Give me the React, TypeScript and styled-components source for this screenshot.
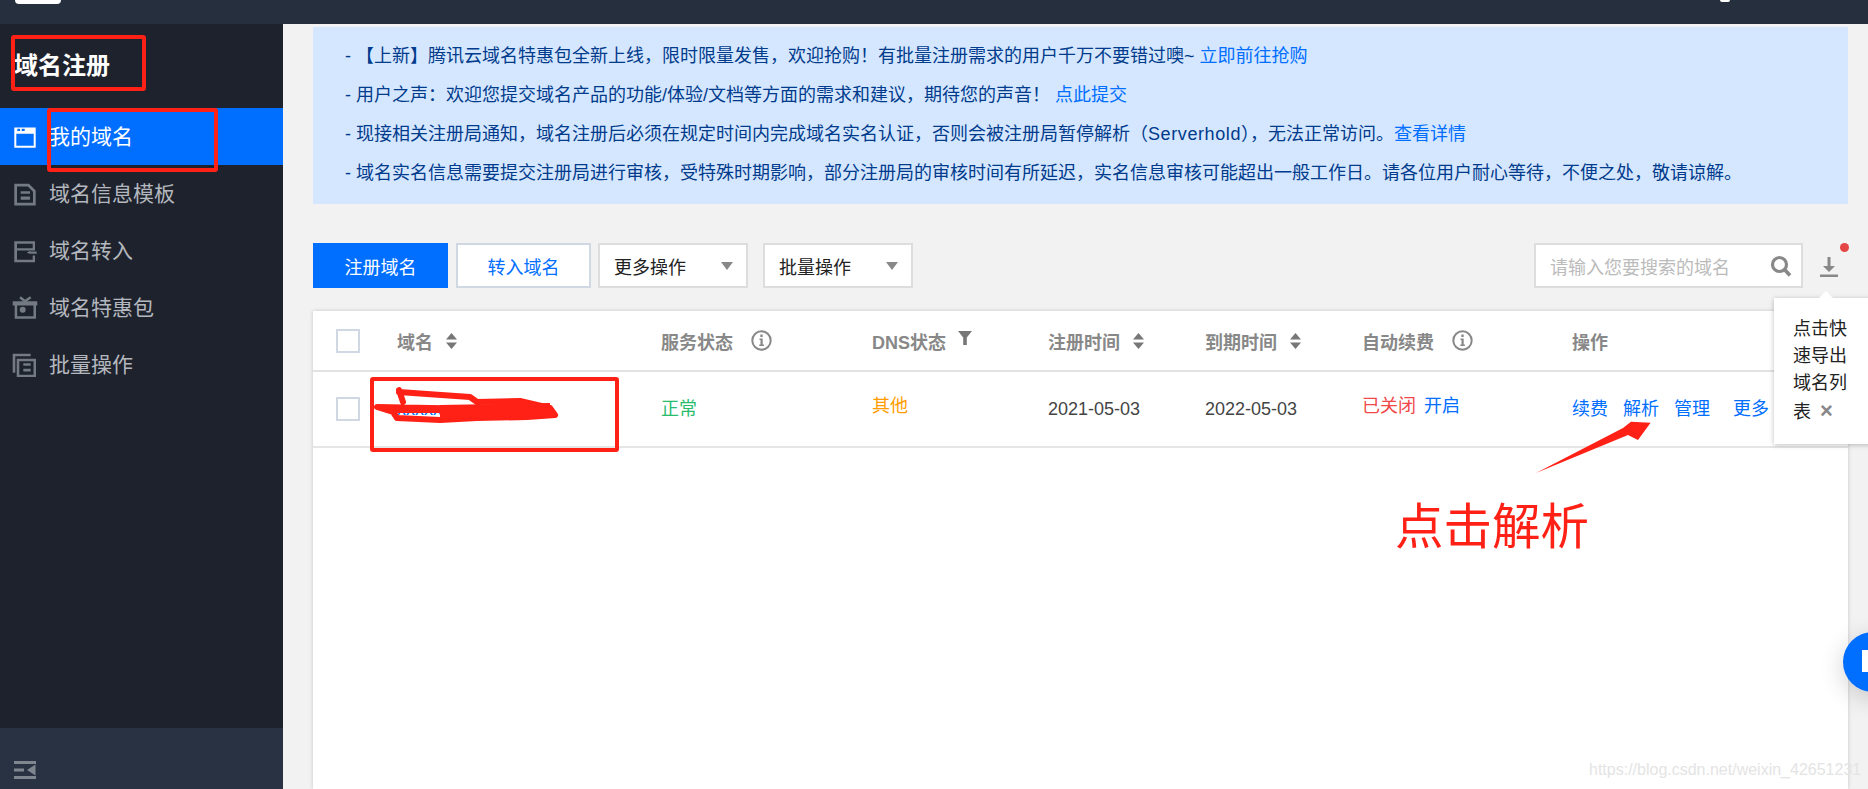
import styled, { createGlobalStyle } from "styled-components";

const GlobalStyle = createGlobalStyle`
  html, body {
    margin: 0;
    padding: 0;
    background: #f2f2f2;
  }
  * {
    box-sizing: border-box;
  }
  body {
    font-family: "Liberation Sans", "Noto Sans CJK SC", sans-serif;
  }
`;

const MENU_ITEM = [
  { text: "我的域名", icon: "window" },
  { text: "域名信息模板", icon: "doc" },
  { text: "域名转入", icon: "transfer" },
  { text: "域名特惠包", icon: "gift" },
  { text: "批量操作", icon: "layers" },
];

const COLUMNS = "84px 264px 211px 176px 157px 157px 210px 1fr";

const MenuIcon = ({ name }: { name: string }) => (
  <svg width="26" height="24" viewBox="0 0 26 24" fill="currentColor">
    {name === "window" && (
      <path
        fillRule="evenodd"
        d="M2.300 2.500h21.400v20.300H2.300zM4.300 8.800v12h17.400v-12zM5.300 3.800V6h2.800V3.800zM9.700 3.800V6h3V3.800z"
      />
    )}
    {name === "doc" && (
      <path
        fillRule="evenodd"
        d="M2.300 1.800H17l6.700 6.700v15H2.300zM5 4.500v16.300h16V9.700l-5.200-5.200zM8.700 9.200H18v2.600H8.700zM8.700 14.500H18v3.300H8.700z"
      />
    )}
    {name === "transfer" && (
      <>
        <path
          fillRule="evenodd"
          d="M2.300 2.200H23v9.300H5v9.300h15.700v-4.300H23v6.700H2.300zM5 4.700v4.500h15.700V4.700z"
        />
        <path d="M14.700 13.700 18 11.800v.700h6.700v2.300H17.500z" />
      </>
    )}
    {name === "gift" && (
      <>
        <path
          fillRule="evenodd"
          d="M.700 5.200h24.600v4.300H24v13.300H2.700V9.500H.700zM5.200 9.500v10.800h16.300V9.500zM10.700 10.800a3 3 0 1 1 0 6 3 3 0 0 1 0-6z"
        />
        <path d="M8 1.200 13 5.200 18.700 1.200" fill="none" stroke="currentColor" strokeWidth="2.500" />
      </>
    )}
    {name === "layers" && (
      <>
        <path d="M.700.800h18v2.500H3.300v16.500H.700z" />
        <path
          fillRule="evenodd"
          d="M4.700 5.800H24v18.400H4.700zM7.300 8.300v13.400h14.200V8.300zM11.300 10.200h7.400v2.600h-7.400zM11.300 15.800h7.400v2.700h-7.400z"
        />
      </>
    )}
  </svg>
);

const SortIcon = () => (
  <SortSvg width="11" height="16" viewBox="0 0 11 16" fill="#777">
    <path d="M5.500 0 11 6.500H0zM0 9.500h11L5.500 16z" />
  </SortSvg>
);

const InfoIcon = () => (
  <InfoSvg width="21" height="21" viewBox="0 0 21 21">
    <circle cx="10.500" cy="10.500" r="9.200" fill="none" stroke="#888" strokeWidth="2" />
    <path d="M9.300 4.500h2.400v2.400H9.300zM8.500 8.500h3.200v6h1.200v1.600H8.300v-1.600h1.200V10H8.500z" fill="#888" />
  </InfoSvg>
);

const App = () => {
  return (
    <Page>
      <GlobalStyle />
      <TopBar>
        <Logo />
        <Avatar />
      </TopBar>
      <Body>
        <Sidebar>
          <SideTitle>域名注册</SideTitle>
          <MenuList>
            {MENU_ITEM.map((menu, i) => (
              <MenuItem key={menu.text} $active={i === 0}>
                <MenuIcon name={menu.icon} />
                <span>{menu.text}</span>
              </MenuItem>
            ))}
          </MenuList>
          <CollapseBar>
            <svg width="22" height="18" viewBox="0 0 22 18" fill="#7f868f">
              <path d="M0 0h22v3H0zM0 15h22v3H0zM0 7.500h10v3H0zM21.500 3.500v11L13 9z" />
            </svg>
          </CollapseBar>
        </Sidebar>
        <Main>
          <Notice>
            <p>
              - 【上新】腾讯云域名特惠包全新上线，限时限量发售，欢迎抢购！有批量注册需求的用户千万不要错过噢~{" "}
              <a>立即前往抢购</a>
            </p>
            <p>
              - 用户之声：欢迎您提交域名产品的功能/体验/文档等方面的需求和建议，期待您的声音！ <a>点此提交</a>
            </p>
            <p>
              - 现接相关注册局通知，域名注册后必须在规定时间内完成域名实名认证，否则会被注册局暂停解析（<Latin>Serverhold</Latin>），无法正常访问。
              <a>查看详情</a>
            </p>
            <p>
              - 域名实名信息需要提交注册局进行审核，受特殊时期影响，部分注册局的审核时间有所延迟，实名信息审核可能超出一般工作日。请各位用户耐心等待，不便之处，敬请谅解。
            </p>
          </Notice>
          <Toolbar>
            <PrimaryBtn>注册域名</PrimaryBtn>
            <OutlineBtn>转入域名</OutlineBtn>
            <SelectBtn>更多操作</SelectBtn>
            <SelectBtn>批量操作</SelectBtn>
            <SearchBox>
              <span>请输入您要搜索的域名</span>
              <svg width="22" height="22" viewBox="0 0 22 22" fill="none" stroke="#888">
                <circle cx="9.500" cy="9.500" r="7" strokeWidth="3.200" />
                <path d="M14.500 14.500 20 20.500" strokeWidth="3.600" />
              </svg>
            </SearchBox>
            <DownloadBtn>
              <svg width="18" height="20" viewBox="0 0 18 20" fill="#888">
                <path d="M7.500 0h3v9H15l-6 6-6-6h4.500zM0 17.500h18V20H0z" />
              </svg>
            </DownloadBtn>
          </Toolbar>
          <TableCard>
            <HeadRow>
              <CheckCell>
                <CheckBox />
              </CheckCell>
              <HeadCell>
                域名
                <SortIcon />
              </HeadCell>
              <HeadCell>
                服务状态
                <InfoIcon />
              </HeadCell>
              <HeadCell>
                DNS状态
                <FilterSvg width="14" height="14" viewBox="0 0 14 14" fill="#777">
                  <path d="M0 0h14L8.800 6.500V14H5.200V6.500z" />
                </FilterSvg>
              </HeadCell>
              <HeadCell>
                注册时间
                <SortIcon />
              </HeadCell>
              <HeadCell>
                到期时间
                <SortIcon />
              </HeadCell>
              <HeadCell>
                自动续费
                <InfoIcon />
              </HeadCell>
              <HeadCell>操作</HeadCell>
            </HeadRow>
            <DataRow>
              <CheckCell>
                <CheckBox />
              </CheckCell>
              <DataCell $color="#006eff">xxxxxxxxxxxx.com</DataCell>
              <DataCell $color="#29bc6d">正常</DataCell>
              <DataCell $color="#ff9d00" $raised>
                其他
              </DataCell>
              <DataCell>2021-05-03</DataCell>
              <DataCell>2022-05-03</DataCell>
              <DataCell $color="#f04848" $raised>
                已关闭<RowLink $left={8}>开启</RowLink>
              </DataCell>
              <DataCell>
                <RowLink>续费</RowLink>
                <RowLink $left={15}>解析</RowLink>
                <RowLink $left={15}>管理</RowLink>
                <RowLink $left={23}>更多</RowLink>
              </DataCell>
            </DataRow>
          </TableCard>
        </Main>
      </Body>

      <Tooltip>
        点击快速导出域名列表<CloseMark>×</CloseMark>
      </Tooltip>
      <NotifyDot />
      <ChatBubble>
        <svg width="24" height="26" viewBox="0 0 24 26" fill="#fff">
          <path d="M0 0h24v26l-6-4H0z" />
        </svg>
      </ChatBubble>
      <Watermark>https://blog.csdn.net/weixin_42651231</Watermark>

      <TitleMark />
      <MenuMark />
      <DomainMark />
      <Annotations viewBox="0 0 1868 789" width="1868" height="789">
        <path
          d="M399 390 L403 402 M399 392 L427 394 L470 397 L477 402 L520 401 L550 408 L555 415 L527 417 L477 418 L440 420 L397 418 L393 412 L377 407 L430 408 L550 410"
          fill="none"
          stroke="#ff2116"
          strokeWidth="6"
          strokeLinecap="round"
          strokeLinejoin="round"
        />
        <path d="M395 410 L442 410" fill="none" stroke="#ff2116" strokeWidth="6" />
        <path d="M440 405 L550 403 L550 415 L440 419 Z" fill="#ff2116" />
        <polygon
          points="1650.600,422.700 1638,440 1628,435 1536,473 1623,428 1631,421.700"
          fill="#ff2116"
        />
      </Annotations>
      <CalloutText>点击解析</CalloutText>
    </Page>
  );
};

const Page = styled.div`
  position: relative;
  width: 1868px;
  height: 789px;
  display: flex;
  flex-direction: column;
  overflow: hidden;
  background: #f2f2f2;
`;

const TopBar = styled.header`
  height: 24px;
  flex: none;
  display: flex;
  align-items: flex-start;
  justify-content: space-between;
  padding: 0 138px 0 15px;
  background: #262f3e;
`;

const Logo = styled.div`
  width: 46px;
  height: 4px;
  border-radius: 0 0 10px 10px;
  background: #fff;
`;

const Avatar = styled.div`
  width: 10px;
  height: 2px;
  border-radius: 0 0 5px 5px;
  background: #fff;
`;

const Body = styled.div`
  flex: 1;
  min-height: 0;
  display: flex;
`;

const Sidebar = styled.nav`
  width: 283px;
  flex: none;
  display: flex;
  flex-direction: column;
  background: #1e222d;
`;

const SideTitle = styled.h2`
  height: 84px;
  margin: 0;
  padding: 0 0 1px 14px;
  display: flex;
  align-items: center;
  font-size: 24px;
  line-height: 30px;
  font-weight: 700;
  color: #fff;
`;

const MenuList = styled.div`
  flex: 1;
  display: flex;
  flex-direction: column;
`;

const MenuItem = styled.div<{ $active?: boolean }>`
  height: 57px;
  display: flex;
  align-items: center;
  gap: 11px;
  padding-left: 12px;
  font-size: 21px;
  background: ${(p) => (p.$active ? "#006eff" : "transparent")};
  color: ${(p) => (p.$active ? "#fff" : "#b4b8be")};

  & > span {
    padding-bottom: 4px;
  }

  & > svg {
    color: ${(p) => (p.$active ? "#fff" : "#737a82")};
  }
`;

const CollapseBar = styled.div`
  height: 61px;
  display: flex;
  align-items: flex-end;
  padding: 0 0 10px 14px;
  background: #283242;
`;

const Main = styled.main`
  flex: 1;
  min-width: 0;
  display: flex;
  flex-direction: column;
  padding: 3px 20px 0 30px;
`;

const Notice = styled.section`
  height: 177px;
  padding: 10px 0 0 32px;
  background: #d5e7ff;
  color: #003b8c;
  font-size: 18px;

  & > p {
    margin: 0;
    height: 39px;
    line-height: 39px;
    white-space: nowrap;
  }

  & a {
    color: #006eff;
  }
`;

const Latin = styled.span`
  letter-spacing: 0.600px;
`;

const Toolbar = styled.div`
  height: 45px;
  margin-top: 39px;
  flex: none;
  display: flex;
`;

const PrimaryBtn = styled.div`
  width: 135px;
  display: flex;
  align-items: center;
  justify-content: center;
  background: #006eff;
  color: #fff;
  font-size: 18px;
`;

const OutlineBtn = styled.div`
  width: 135px;
  margin-left: 8px;
  display: flex;
  align-items: center;
  justify-content: center;
  background: #fff;
  border: 2px solid #d0d8e4;
  color: #006eff;
  font-size: 18px;
`;

const SelectBtn = styled.div`
  position: relative;
  width: 150px;
  margin-left: 7px;
  display: flex;
  align-items: center;
  padding-left: 14px;
  background: #fff;
  border: 2px solid #ddd;
  color: #222;
  font-size: 18px;

  & + & {
    margin-left: 15px;
  }

  &::after {
    content: "";
    position: absolute;
    right: 13px;
    top: 17px;
    border-style: solid;
    border-width: 8px 6px 0;
    border-color: #888 transparent transparent;
  }
`;

const SearchBox = styled.div`
  width: 269px;
  margin-left: auto;
  display: flex;
  align-items: center;
  justify-content: space-between;
  padding: 0 9px 0 14px;
  background: #fff;
  border: 2px solid #ddd;
  color: #bbb;
  font-size: 18px;
`;

const DownloadBtn = styled.div`
  width: 45px;
  display: flex;
  align-items: center;
  justify-content: flex-start;
  padding: 3px 0 0 17px;
`;

const TableCard = styled.section`
  flex: 1;
  margin-top: 23px;
  background: #fff;
  box-shadow: 0 0 4px rgba(0, 0, 0, 0.18);
`;

const HeadRow = styled.div`
  height: 61px;
  display: grid;
  grid-template-columns: ${COLUMNS};
  align-items: center;
  border-bottom: 2px solid #e2e2e2;
`;

const DataRow = styled.div`
  height: 76px;
  display: grid;
  grid-template-columns: ${COLUMNS};
  align-items: center;
  border-bottom: 2px solid #e6e6e6;
`;

const CheckCell = styled.div`
  padding-left: 23px;
`;

const CheckBox = styled.div`
  width: 24px;
  height: 24px;
  border: 2px solid #d0d8e4;
  background: #fff;
`;

const HeadCell = styled.div`
  display: flex;
  align-items: center;
  font-size: 18px;
  font-weight: 700;
  color: #888;
`;

const DataCell = styled.div<{ $color?: string; $raised?: boolean }>`
  font-size: 18px;
  line-height: 26px;
  white-space: nowrap;
  padding-bottom: ${(p) => (p.$raised ? "6px" : "0")};
  color: ${(p) => p.$color || "#444"};
`;

const RowLink = styled.span<{ $left?: number }>`
  margin-left: ${(p) => p.$left || 0}px;
  color: #006eff;
`;

const SortSvg = styled.svg`
  margin-left: 13px;
`;

const InfoSvg = styled.svg`
  margin-left: 18px;
`;

const FilterSvg = styled.svg`
  margin: 0 0 5px 12px;
`;

const Tooltip = styled.div`
  position: absolute;
  left: 1774px;
  top: 298px;
  width: 110px;
  height: 146px;
  padding: 18px 30px 0 19px;
  background: #fff;
  box-shadow: 0 1px 5px rgba(0, 0, 0, 0.25);
  color: #222;
  font-size: 18px;
  line-height: 27px;

  &::before {
    content: "";
    position: absolute;
    left: 45px;
    top: -7px;
    border-style: solid;
    border-width: 0 7px 7px;
    border-color: transparent transparent #fff;
  }
`;

const CloseMark = styled.span`
  margin-left: 9px;
  color: #888;
  font-size: 22px;
  font-weight: 700;
`;

const NotifyDot = styled.span`
  position: absolute;
  left: 1840px;
  top: 243px;
  width: 9px;
  height: 9px;
  border-radius: 50%;
  background: #e54545;
`;

const ChatBubble = styled.div`
  position: absolute;
  left: 1843px;
  top: 632px;
  width: 60px;
  height: 60px;
  padding: 18px 0 0 19px;
  border-radius: 50%;
  background: #006eff;
  box-shadow: 0 6px 24px rgba(0, 0, 0, 0.18);
`;

const Watermark = styled.div`
  position: absolute;
  left: 1589px;
  top: 760px;
  font-size: 16px;
  line-height: 20px;
  color: #e4e4e4;
  white-space: nowrap;
`;

const RedBox = styled.div`
  position: absolute;
  border: 4px solid #ff2116;
  border-radius: 3px;
`;

const TitleMark = styled(RedBox)`
  left: 11px;
  top: 35px;
  width: 135px;
  height: 56px;
`;

const MenuMark = styled(RedBox)`
  left: 47px;
  top: 108px;
  width: 171px;
  height: 64px;
`;

const DomainMark = styled(RedBox)`
  left: 370px;
  top: 377px;
  width: 249px;
  height: 75px;
`;

const Annotations = styled.svg`
  position: absolute;
  left: 0;
  top: 0;
  pointer-events: none;
`;

const CalloutText = styled.div`
  position: absolute;
  left: 1395px;
  top: 492px;
  font-size: 48.500px;
  line-height: 70px;
  color: #ff2116;
  white-space: nowrap;
`;

export default App;
